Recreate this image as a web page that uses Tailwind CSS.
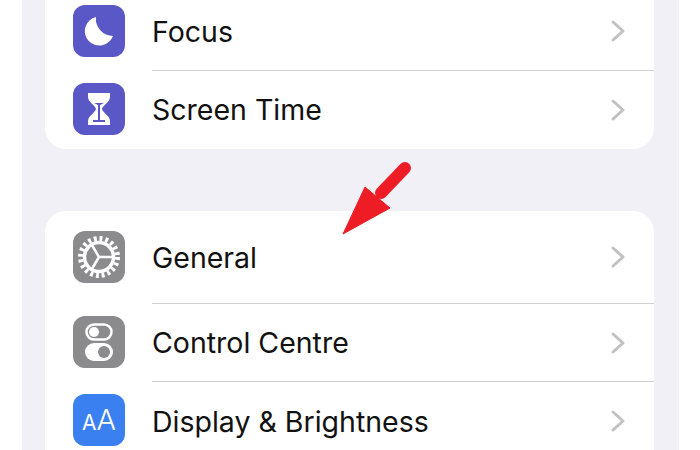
<!DOCTYPE html>
<html lang="en">
<head>
  <meta charset="UTF-8">
  <title>Settings</title>
  <script src="https://cdn.jsdelivr.net/npm/@tailwindcss/browser@4"></script>
</head>
<body class="bg-white h-[450px] w-[700px] overflow-hidden relative font-['Inter',sans-serif] text-[28.5px] text-[#111]">
  <div class="ml-[22px] w-[657px] h-[450px] bg-[#f0f0f6] pl-[23px] pr-[25px] overflow-hidden">
    <!-- first group, scrolled off the top -->
    <div class="-mt-[8px] h-[157px] bg-white rounded-b-[21px] overflow-hidden">
      <div class="h-[79px] flex items-center pl-[28px]">
        <div class="w-[52px] h-[52px] mb-[1px] rounded-[12px] bg-[#5a58c6] flex items-center justify-center shrink-0">
          <svg width="52" height="52" viewBox="0 0 52 52"><path d="M23 12A14.500 14.500 0 1 0 40 31A17 17 0 0 1 23 12Z" fill="#fff"/></svg>
        </div>
        <div class="ml-[27px] flex-1 self-stretch flex items-center justify-between border-b border-[#d0d0d2] pr-[28px]">
          <span class="mt-[3px]">Focus</span>
          <svg width="16" height="24" viewBox="0 0 16 24"><path d="M3 3l10 9-10 9" fill="none" stroke="#c1c1c4" stroke-width="3" stroke-linecap="round" stroke-linejoin="round"/></svg>
        </div>
      </div>
      <div class="h-[78px] flex items-center pl-[28px]">
        <div class="w-[52px] h-[52px] mb-[2px] rounded-[12px] bg-[#5a58c6] flex items-center justify-center shrink-0">
          <svg width="52" height="52" viewBox="0 0 52 52">
            <path d="M15 10h22v4c0 5-7 8-8 12 1 4 8 7 8 12v4H15v-4c0-5 7-8 8-12-1-4-8-7-8-12z" fill="#fff"/>
            <path d="M21 20h10l-4 2v15h5v2H20v-2h5V22z" fill="#5a58c6"/>
          </svg>
        </div>
        <div class="ml-[27px] flex-1 flex items-center justify-between pr-[28px]">
          <span class="mt-[1px]">Screen Time</span>
          <svg width="16" height="24" viewBox="0 0 16 24"><path d="M3 3l10 9-10 9" fill="none" stroke="#c1c1c4" stroke-width="3" stroke-linecap="round" stroke-linejoin="round"/></svg>
        </div>
      </div>
    </div>

    <div class="mt-[62px] bg-white rounded-t-[21px] overflow-hidden">
      <div class="h-[93px] flex items-center pl-[28px]">
        <div class="w-[52px] h-[52px] mb-[2px] rounded-[12px] bg-[#8b8b8e] flex items-center justify-center shrink-0">
          <svg width="52" height="52" viewBox="0 0 52 52">
            <circle cx="26" cy="26" r="14.500" fill="none" stroke="#fff" stroke-width="3.5"/>
            <circle cx="26" cy="26" r="18.500" fill="none" stroke="#fff" stroke-width="5" stroke-dasharray="2.906 2.906"/>
            <path d="M26 26H41M26 26L18 12.500M26 26L18 39.500" stroke="#fff" stroke-width="2.5" fill="none"/>
          </svg>
        </div>
        <div class="ml-[27px] flex-1 self-stretch flex items-center justify-between border-b border-[#d0d0d2] pr-[28px]">
          <span class="mt-[2px]">General</span>
          <svg width="16" height="24" viewBox="0 0 16 24"><path d="M3 3l10 9-10 9" fill="none" stroke="#c1c1c4" stroke-width="3" stroke-linecap="round" stroke-linejoin="round"/></svg>
        </div>
      </div>
      <div class="h-[78px] flex items-center pl-[28px]">
        <div class="w-[52px] h-[52px] mb-[2px] rounded-[12px] bg-[#8b8b8e] flex items-center justify-center shrink-0">
          <svg width="52" height="52" viewBox="0 0 52 52">
            <rect x="13.500" y="8.500" width="25" height="15" rx="7.500" fill="none" stroke="#fff" stroke-width="2.500"/>
            <circle cx="21" cy="16" r="5" fill="#fff"/>
            <rect x="12" y="27" width="28" height="18" rx="9" fill="#fff"/>
            <circle cx="31" cy="36" r="6" fill="#8b8b8e"/>
          </svg>
        </div>
        <div class="ml-[27px] flex-1 self-stretch flex items-center justify-between border-b border-[#d0d0d2] pr-[28px]">
          <span class="mt-[2px]">Control Centre</span>
          <svg width="16" height="24" viewBox="0 0 16 24"><path d="M3 3l10 9-10 9" fill="none" stroke="#c1c1c4" stroke-width="3" stroke-linecap="round" stroke-linejoin="round"/></svg>
        </div>
      </div>
      <div class="h-[78px] flex items-center pl-[28px]">
        <div class="w-[52px] h-[52px] mb-[2px] rounded-[12px] bg-[#3a80f0] flex items-baseline justify-center shrink-0 text-white pt-[9px]">
          <span class="text-[21px] leading-[34px]">A</span><span class="text-[29px] leading-[34px] font-light">A</span>
        </div>
        <div class="ml-[27px] flex-1 flex items-center justify-between pr-[28px]">
          <span class="mt-[2px]">Display &amp; Brightness</span>
          <svg width="16" height="24" viewBox="0 0 16 24"><path d="M3 3l10 9-10 9" fill="none" stroke="#c1c1c4" stroke-width="3" stroke-linecap="round" stroke-linejoin="round"/></svg>
        </div>
      </div>
    </div>
  </div>

  <!-- red annotation arrow -->
  <svg class="absolute left-[335px] top-[155px]" width="85" height="85" viewBox="0 0 85 85">
    <path d="M70 13L46 38" stroke="#ee1c25" stroke-width="12" stroke-linecap="round"/>
    <path d="M8 79L30 32L55 53Z" fill="#ee1c25" stroke="#ee1c25" stroke-width="1" stroke-linejoin="round"/>
  </svg>
</body>
</html>
